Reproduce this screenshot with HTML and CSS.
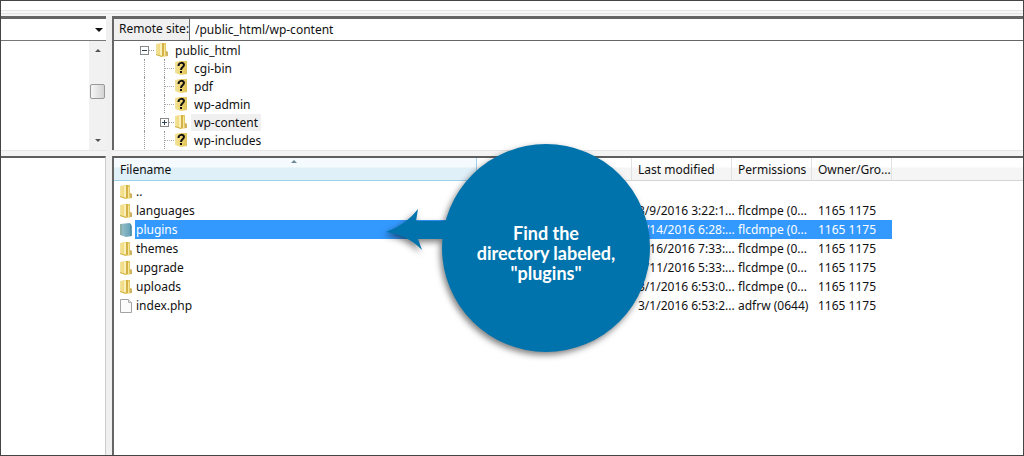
FILE: index.html
```html
<!DOCTYPE html>
<html lang="en">
<head>
<meta charset="utf-8">
<title>Remote site</title>
<link rel="stylesheet" href="styles.css">
</head>
<body>
<svg class="defs" aria-hidden="true">
  <defs>
    <linearGradient id="gold" x1="0" x2="1" y1="0" y2="0">
      <stop offset="0" stop-color="#f3e39c"/><stop offset=".5" stop-color="#efd671"/><stop offset="1" stop-color="#dfc45c"/>
    </linearGradient>
    <linearGradient id="teal" x1="0" x2="1" y1="0" y2="0">
      <stop offset="0" stop-color="#9cc3cc"/><stop offset="1" stop-color="#5f9eb4"/>
    </linearGradient>
    <symbol id="folder" viewBox="0 0 14 16">
      <path d="M1 2l5-1h5v8l2 1v4l-6 1-6-2z" fill="url(#gold)"/>
      <path d="M5 2l2-1v13l-2-1z" fill="#faf0ba"/>
      <path d="M7 1h2v13H7z" fill="#d3b147"/>
      <path d="M9 3h1v11H9z" fill="#f6e7a0"/>
      <path d="M11 9l2 1v4h-2z" fill="#cdb262"/>
      <path d="M1 12l6 2v1l-6-2z" fill="#cfb047"/>
    </symbol>
    <symbol id="folder-selected" viewBox="0 0 14 16">
      <path d="M1 2l10-1 2 3v10l-6 1-6-2z" fill="url(#teal)"/>
      <path d="M1 2h2v11H1z" fill="#8baea7"/>
      <path d="M11 2h1v12h-1z" fill="#4f8da9"/>
    </symbol>
    <symbol id="unknown" viewBox="0 0 14 16">
      <path d="M1 2l5-1h7v13l-6 1-6-2z" fill="url(#gold)"/>
      <path d="M4.500 6c0-4 5.500-4 5.500-1 0 2-3 2-3 5" fill="none" stroke="#111" stroke-width="2"/>
      <path d="M6 11h2v2H6z" fill="#111"/>
    </symbol>
    <symbol id="file" viewBox="0 0 14 16">
      <path d="M1.500 1.500h8l3 3v10h-11z" fill="#fbfbfb" stroke="#a3a3a3"/>
      <path d="M9.500 1.500v3h3" fill="#e8e8e8" stroke="#b0b0b0"/>
    </symbol>
  </defs>
</svg>
<main class="app">
  <div class="toolbar-edge"></div>
  <div class="panes">
    <aside class="local">
      <button class="combo" aria-label="Local site">
        <svg viewBox="0 0 8 4" class="caret"><path d="M0 0h8L4 4z"/></svg>
      </button>
      <div class="local-tree">
        <div class="scrollbar">
          <svg viewBox="0 0 6 3" class="arrow"><path d="M0 3h6L3 0z"/></svg>
          <span class="thumb"></span>
          <svg viewBox="0 0 6 3" class="arrow"><path d="M0 0h6L3 3z"/></svg>
        </div>
      </div>
      <div class="splitter"></div>
      <div class="local-files"></div>
    </aside>
    <section class="remote">
      <div class="path-bar">
        <label for="path">Remote site:</label>
        <input id="path" type="text" value="/public_html/wp-content">
      </div>
      <ul class="tree">
        <li class="root"><span class="toggle minus"></span><span class="twig"></span><svg class="icon"><use href="#folder"/></svg><span class="name">public_html</span></li>
        <li class="child"><span class="branch"></span><svg class="icon"><use href="#unknown"/></svg><span class="name">cgi-bin</span></li>
        <li class="child"><span class="branch"></span><svg class="icon"><use href="#unknown"/></svg><span class="name">pdf</span></li>
        <li class="child"><span class="branch"></span><svg class="icon"><use href="#unknown"/></svg><span class="name">wp-admin</span></li>
        <li class="child open"><span class="toggle plus"></span><span class="twig"></span><svg class="icon"><use href="#folder"/></svg><span class="name current">wp-content</span></li>
        <li class="child"><span class="branch"></span><svg class="icon"><use href="#unknown"/></svg><span class="name">wp-includes</span></li>
      </ul>
      <div class="splitter"></div>
      <div class="listing">
        <table class="files">
          <colgroup><col class="c-name"><col class="c-type"><col class="c-date"><col class="c-perm"><col class="c-owner"><col></colgroup>
          <thead>
            <tr><th class="sorted">Filename<svg viewBox="0 0 6 3" class="sort"><path d="M0 3h6L3 0z"/></svg></th><th></th><th>Last modified</th><th>Permissions</th><th>Owner/Gro...</th><th></th></tr>
          </thead>
          <tbody>
            <tr><td><div class="entry"><svg class="icon"><use href="#folder"/></svg><span>..</span></div></td><td></td><td></td><td></td><td></td><td></td></tr>
            <tr><td><div class="entry"><svg class="icon"><use href="#folder"/></svg><span>languages</span></div></td><td></td><td>3/9/2016 3:22:1...</td><td>flcdmpe (0...</td><td>1165 1175</td><td></td></tr>
            <tr class="selected"><td><div class="entry"><svg class="icon"><use href="#folder-selected"/></svg><span>plugins</span></div></td><td></td><td>3/14/2016 6:28:...</td><td>flcdmpe (0...</td><td>1165 1175</td><td></td></tr>
            <tr><td><div class="entry"><svg class="icon"><use href="#folder"/></svg><span>themes</span></div></td><td></td><td>3/16/2016 7:33:...</td><td>flcdmpe (0...</td><td>1165 1175</td><td></td></tr>
            <tr><td><div class="entry"><svg class="icon"><use href="#folder"/></svg><span>upgrade</span></div></td><td></td><td>3/11/2016 5:33:...</td><td>flcdmpe (0...</td><td>1165 1175</td><td></td></tr>
            <tr><td><div class="entry"><svg class="icon"><use href="#folder"/></svg><span>uploads</span></div></td><td></td><td>3/1/2016 6:53:0...</td><td>flcdmpe (0...</td><td>1165 1175</td><td></td></tr>
            <tr><td><div class="entry"><svg class="icon"><use href="#file"/></svg><span>index.php</span></div></td><td></td><td>3/1/2016 6:53:2...</td><td>adfrw (0644)</td><td>1165 1175</td><td></td></tr>
          </tbody>
        </table>
      </div>
    </section>
  </div>
  <div class="callout">
    <svg viewBox="0 0 264 208" class="bubble" aria-hidden="true">
      <circle cx="160" cy="104" r="104"/>
      <path d="M0 88Q20 81 32 65L30 77H64V95H32L36 106Q22 91 0 88z"/>
    </svg>
    <p>Find the<br>directory labeled,<br>"plugins"</p>
  </div>
</main>
</body>
</html>
```
FILE: styles.css
```css
* { box-sizing: border-box; }
body {
  margin: 0;
  background: #fff;
  color: #111;
  font: 12px/18px "Noto Sans", "Open Sans", sans-serif;
}
.defs { position: absolute; width: 0; height: 0; }
.app {
  position: relative;
  display: flex;
  flex-direction: column;
  min-height: 100vh;
  border: 1px solid #444;
  overflow: hidden;
}
.toolbar-edge {
  height: 15px;
  background: linear-gradient(#fff 9px, #e4e4e4 9px 10px, #f8f8f8 10px 12px, #e4e4e4 12px 13px, #f4f4f4 13px);
}
.panes { flex: 1; display: flex; gap: 6px; background: #f0f0f0; }
.local { width: 105px; display: flex; flex-direction: column; }
.combo {
  height: 25px;
  padding: 0 3px;
  border: 0;
  border-top: 3px solid #666;
  border-bottom: 1px solid #777;
  background: #fff;
  display: flex;
  align-items: center;
  justify-content: flex-end;
}
.caret { width: 8px; height: 4px; fill: #111; }
.local-tree { height: 109px; background: #fff; display: flex; justify-content: flex-end; }
.scrollbar {
  width: 17px;
  padding: 8px 0;
  background: #f1f1f1;
  display: flex;
  flex-direction: column;
  align-items: center;
  justify-content: space-between;
}
.arrow { width: 6px; height: 3px; fill: #555; }
.thumb {
  width: 15px;
  height: 15px;
  margin-bottom: 8px;
  border: 1px solid #999;
  border-radius: 2px;
  background: linear-gradient(90deg, #f6f6f6, #d4d4d4);
}
.splitter { height: 6px; background: linear-gradient(#e6e6e6 1px, #f4f4f4 1px); }
.local-files { flex: 1; border-top: 2px solid #5f5f5f; border-right: 1px solid #ccc; background: #fff; }
.remote { flex: 1; min-width: 0; display: flex; flex-direction: column; }
.path-bar {
  display: flex;
  height: 25px;
  border-top: 3px solid #666;
  border-bottom: 1px solid #666;
  border-left: 2px solid #666;
  background: #fff;
}
.path-bar label { width: 76px; padding: 1px 0 0 5px; border-right: 1px solid #666; background: #f0f0f0; white-space: nowrap; }
.path-bar input { flex: 1; min-width: 0; border: 0; padding: 0 5px; font: inherit; color: inherit; background: transparent; }
.tree {
  list-style: none;
  height: 109px;
  margin: 0;
  padding: 0 0 0 26px;
  border-left: 2px solid #666;
  background: #fff;
  overflow: hidden;
}
.tree li { display: flex; align-items: center; height: 18px; }
.tree .child { margin-left: 4px; padding-left: 19px; border-left: 1px dotted #999; }
.tree .open { padding-left: 15px; }
.toggle {
  width: 9px;
  height: 9px;
  border: 1px solid #888;
}
.minus { background: linear-gradient(#345, #345) center / 5px 1px no-repeat #fff; }
.plus { background: linear-gradient(#345, #345) center / 5px 1px no-repeat, linear-gradient(#345, #345) center / 1px 5px no-repeat #fff; }
.twig { width: 5px; border-top: 1px dotted #999; margin-right: 1px; }
.open .twig { width: 5px; margin-right: 0; }
.branch { align-self: stretch; width: 10px; border-left: 1px dotted #999; background: linear-gradient(90deg, #aaa 1px, transparent 1px) 0 9px / 2px 1px repeat-x; }
.icon { flex: none; width: 14px; height: 16px; }
.name { padding: 0 3px; margin-left: 3px; line-height: 17px; }
.current { background: #f0f0f0; }
.listing { flex: 1; border-top: 2px solid #5f5f5f; border-left: 2px solid #666; background: #fff; }
.files { width: 100%; border-collapse: separate; border-spacing: 0; table-layout: fixed; }
.c-name { width: 363px; }
.c-type { width: 155px; }
.c-date { width: 100px; }
.c-perm { width: 80px; }
.c-owner { width: 80px; }
.files th {
  position: relative;
  height: 23px;
  padding: 2px 0 0 6px;
  border-right: 1px solid #e2e2e2;
  border-bottom: 1px solid #d5d5d5;
  background: linear-gradient(#fff 9px, #f5f5f5 10px);
  font-weight: normal;
  text-align: left;
  white-space: nowrap;
}
.files th:last-child { border-right: 0; }
.files .sorted { background: linear-gradient(#f4fafd 9px, #e0f0f8 10px); border-color: #9dd2ea; }
.sort { position: absolute; top: 2px; left: 49%; width: 6px; height: 3px; fill: #6c8796; }
.files thead::after { content: ""; display: block; height: 1px; }
.files td { height: 19px; padding: 0 0 0 6px; line-height: 19px; white-space: nowrap; }
.files td:first-child { padding: 0 0 0 5px; }
.entry { display: flex; align-items: center; height: 19px; gap: 2px; }
.entry span { flex: 1; padding-left: 1px; }
.selected { color: #fff; }
.selected .entry span, .selected td:nth-child(n+2):nth-child(-n+5) { background: #3399ff; }
.callout {
  position: absolute;
  top: 143px;
  left: 385px;
  width: 264px;
  height: 208px;
  padding: 10px 0 0 56px;
  display: flex;
  align-items: center;
  justify-content: center;
}
.bubble { position: absolute; inset: 0; fill: #0073ac; filter: drop-shadow(-2px 3px 3px rgba(0, 0, 0, .5)); }
.callout p { position: relative; margin: 0; color: #fff; font: bold 18px/20px Lato, "Open Sans", sans-serif; text-align: center; white-space: nowrap; }
```
